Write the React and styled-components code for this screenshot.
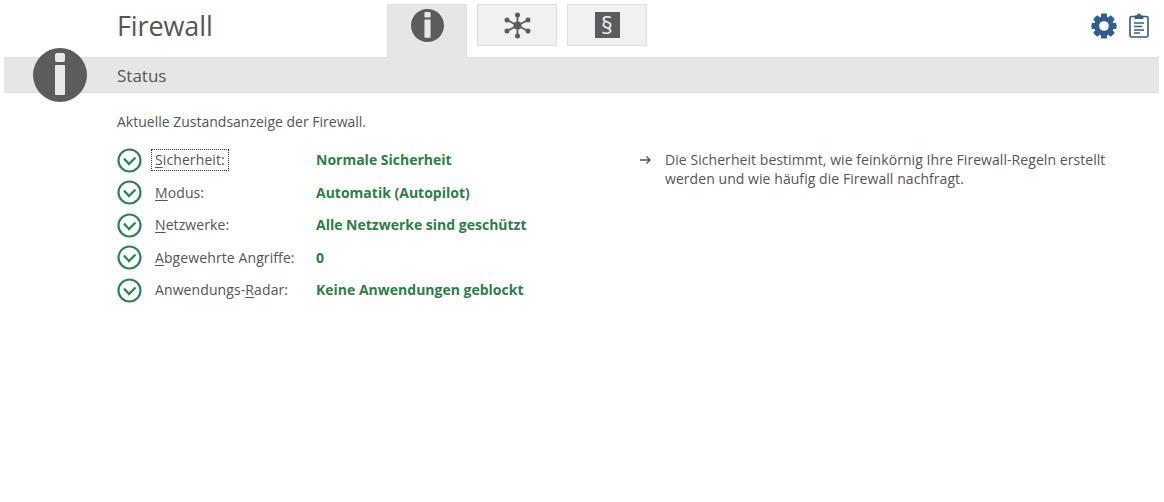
import React from 'react'
import styled, {createGlobalStyle} from 'styled-components'

const GlobalStyle = createGlobalStyle`
	html, body {
		margin: 0;
		padding: 0;
		background: #fff;
	}
	body {
		font-family: "Open Sans", "Noto Sans", sans-serif;
		color: #555;
	}
`

const Page = styled.div`
	position: relative;
	width: 1164px;
	height: 502px;
	overflow: hidden;
	background: #fff;
`

const Header = styled.div`
	display: flex;
	height: 57px;
	padding: 0 15px 0 117px;
	box-sizing: border-box;
`

const Title = styled.h1`
	width: 270px;
	margin: 0;
	padding-top: 8px;
	font-size: 27px;
	line-height: 36px;
	font-weight: 400;
	letter-spacing: -0.1px;
	color: #555;
`

const Tabs = styled.div`
	display: flex;
	gap: 10px;
	padding-top: 4px;
`

const Tab = styled.div`
	display: flex;
	justify-content: center;
	box-sizing: border-box;
	width: 80px;
	height: ${({$active}) => ($active ? '54px' : '42px')};
	padding-top: ${({$active}) => ($active ? '4px' : '7px')};
	background: ${({$active}) => ($active ? '#e6e6e6' : '#f1f1f1')};
	border: 1px solid #dedede;
	border-bottom: ${({$active}) => ($active ? 'none' : '1px solid #dedede')};
	position: relative;
	z-index: 1;
`

const Tools = styled.div`
	display: flex;
	gap: 12px;
	margin-left: auto;
	padding-top: 13px;
`

const Band = styled.div`
	display: flex;
	align-items: center;
	box-sizing: border-box;
	height: 36px;
	margin: 0 5px 0 4px;
	padding-left: 113px;
	background: #e6e6e6;
	border-top: 1px solid #dcdcdc;
	border-bottom: 1px solid #dcdcdc;
	font-size: 17px;
	color: #555;
`

const BigInfo = styled.div`
	position: absolute;
	left: 33px;
	top: 48px;
	width: 54px;
	height: 54px;
`

const Content = styled.div`
	padding: 21px 0 0 117px;
	font-size: 14px;
	line-height: 16px;
`

const Intro = styled.p`
	margin: 0 0 14px;
	color: #555;
`

const Columns = styled.div`
	display: flex;
`

const Rows = styled.div`
	display: grid;
	grid-template-columns: 35px 164px 323px;
	grid-auto-rows: 32.5px;
	align-items: center;
`

const Label = styled.span`
	justify-self: start;
	margin-left: -1px;
	padding: 2px 3px;
	border: 1px dotted ${({$focus}) => ($focus ? '#333' : 'transparent')};
	letter-spacing: 0.1px;
	color: #555;
	white-space: nowrap;
	u {
		text-underline-offset: 2px;
	}
`

const Value = styled.span`
	font-weight: 700;
	color: #2b8045;
	white-space: nowrap;
`

const Hint = styled.div`
	display: flex;
	gap: 13px;
	width: 475px;
	padding-top: 6px;
	line-height: 19px;
	letter-spacing: 0.06px;
	color: #555;
`

const HintArrow = styled.svg`
	flex: none;
	margin-top: 5px;
`

const ParagraphBox = styled.div`
	display: flex;
	align-items: center;
	justify-content: center;
	width: 25px;
	height: 26px;
	background: #5c5c5c;
	color: #eee;
	font-size: 23px;
	line-height: 26px;
`

function InfoIcon({size}) {
	return (
		<svg width={size} height={size} viewBox="0 0 54 54">
			<circle cx="27" cy="27" r="27" fill="#5c5c5c" />
			<rect x="22" y="5" width="10" height="9" rx="2" fill="#e8e8e8" />
			<rect x="22" y="17" width="10" height="30" rx="1" fill="#e8e8e8" />
		</svg>
	)
}

function NodesIcon() {
	const ends = [[13.5, 3], [13.5, 24], [3, 8], [24, 8], [3, 19], [24, 19]]
	return (
		<svg width="27" height="27" viewBox="0 0 27 27">
			{ends.map(([x, y]) => (
				<g key={`${x}-${y}`}>
					<line x1="13.5" y1="13.5" x2={x} y2={y} stroke="#5c5c5c" strokeWidth="1.8" />
					<circle cx={x} cy={y} r="2.5" fill="#5c5c5c" />
				</g>
			))}
			<circle cx="13.5" cy="13.5" r="4" fill="#5c5c5c" />
		</svg>
	)
}

function CheckIcon() {
	return (
		<svg width="25" height="25" viewBox="0 0 25 25" fill="none" stroke="#2f8550">
			<circle cx="12.5" cy="12.5" r="11" strokeWidth="2.2" />
			<path d="M7 10.5 L12 16 L18.5 9.5" strokeWidth="2.3" />
		</svg>
	)
}

function GearIcon() {
	const teeth = [0, 45, 90, 135]
	return (
		<svg width="26" height="26" viewBox="0 0 26 26">
			{teeth.map((a) => (
				<rect key={a} x="10" y="0.5" width="6" height="25" rx="1" fill="#2f5f8f" transform={`rotate(${a} 13 13)`} />
			))}
			<circle cx="13" cy="13" r="9.8" fill="#2f5f8f" />
			<circle cx="13" cy="13" r="4.8" fill="#fff" />
		</svg>
	)
}

function ClipboardIcon() {
	return (
		<svg width="20" height="25" viewBox="0 0 20 25" fill="none" stroke="#2f5f8f">
			<rect x="1" y="3.5" width="18" height="20.5" rx="1.5" strokeWidth="1.6" />
			<path d="M6 5.5 V3 H8 Q8.3 1 10 1 Q11.7 1 12 3 H14 V5.5 Z" fill="#2f5f8f" strokeWidth="1" />
			<path d="M5 10 H15 M5 13.5 H13 M5 17 H15 M5 20 H11" strokeWidth="1.5" />
		</svg>
	)
}

function ArrowIcon() {
	return (
		<HintArrow width="13" height="10" viewBox="0 0 13 10" fill="none" stroke="#555" strokeWidth="1.4">
			<path d="M1 5 H11 M7.5 1.5 L11 5 L7.5 8.5" />
		</HintArrow>
	)
}

const statusRows = [
	{label: <><u>S</u>icherheit:</>, value: 'Normale Sicherheit', focus: true},
	{label: <><u>M</u>odus:</>, value: 'Automatik (Autopilot)'},
	{label: <><u>N</u>etzwerke:</>, value: 'Alle Netzwerke sind geschützt'},
	{label: <><u>A</u>bgewehrte Angriffe:</>, value: '0'},
	{label: <>Anwendungs-<u>R</u>adar:</>, value: 'Keine Anwendungen geblockt'},
]

export default function App() {
	return (
		<Page>
			<GlobalStyle />
			<Header>
				<Title>Firewall</Title>
				<Tabs>
					<Tab $active><InfoIcon size={33} /></Tab>
					<Tab><NodesIcon /></Tab>
					<Tab><ParagraphBox>§</ParagraphBox></Tab>
				</Tabs>
				<Tools>
					<GearIcon />
					<ClipboardIcon />
				</Tools>
			</Header>
			<Band>Status</Band>
			<BigInfo><InfoIcon size={54} /></BigInfo>
			<Content>
				<Intro>Aktuelle Zustandsanzeige der Firewall.</Intro>
				<Columns>
					<Rows>
						{statusRows.map((row) => (
							<React.Fragment key={row.value}>
								<CheckIcon />
								<Label $focus={row.focus}>{row.label}</Label>
								<Value>{row.value}</Value>
							</React.Fragment>
						))}
					</Rows>
					<Hint>
						<ArrowIcon />
						<span>Die Sicherheit bestimmt, wie feinkörnig Ihre Firewall-Regeln erstellt werden und wie häufig die Firewall nachfragt.</span>
					</Hint>
				</Columns>
			</Content>
		</Page>
	)
}
